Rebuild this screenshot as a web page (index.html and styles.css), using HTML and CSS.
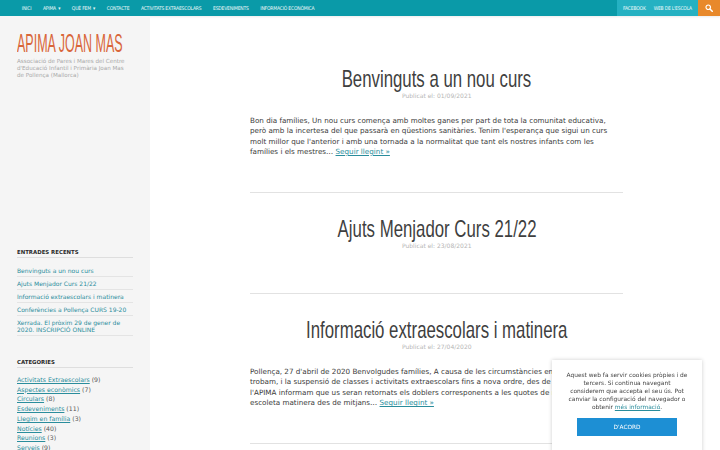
FILE: index.html
```html
<!DOCTYPE html>
<html lang="ca">
<head>
	<meta charset="UTF-8"/>
	<meta name="viewport" content="width=device-width, initial-scale=1.0">
	<title>APIMA Joan Mas</title>
	<link rel="stylesheet" href="styles.css">
</head>
<body>
	<!-- Top bar -->
	<div class="topbar">
		<nav class="mainnav">
			<a href="#">Inici</a>
			<a href="#">APIMA <span class="caret">▾</span></a>
			<a href="#">Què fem <span class="caret">▾</span></a>
			<a href="#">Contacte</a>
			<a href="#">Activitats extraescolars</a>
			<a href="#">Esdeveniments</a>
			<a href="#">Informació econòmica</a>
		</nav>
		<div class="social">
			<a href="#">Facebook</a>
			<a href="#">Web de l'escola</a>
		</div>
		<button class="search" aria-label="Cerca">
			<svg width="8" height="8" viewBox="0 0 16 16"><circle cx="6.5" cy="6.5" r="4.5" fill="none" stroke="#fff" stroke-width="2.4"/><path d="M10 10 L14.5 14.5" stroke="#fff" stroke-width="3" stroke-linecap="round"/></svg>
		</button>
	</div>

	<div class="layout">
		<!-- Sidebar -->
		<aside class="sidebar">
			<div class="site-title"><span>APIMA JOAN MAS</span></div>
			<p class="site-desc">Associació de Pares i Mares del Centre d'Educació Infantil i Primària Joan Mas de&nbsp;Pollença (Mallorca)</p>

			<div class="widget">
				<h3>Entrades recents</h3>
				<ul class="recent">
					<li><a href="#">Benvinguts a un nou curs</a></li>
					<li><a href="#">Ajuts Menjador Curs 21/22</a></li>
					<li><a href="#">Informació extraescolars i matinera</a></li>
					<li><a href="#">Conferències a Pollença CURS 19-20</a></li>
					<li><a href="#">Xerrada. El pròxim 29 de gener de 2020. INSCRIPCIÓ ONLINE</a></li>
				</ul>
			</div>

			<div class="widget">
				<h3>Categories</h3>
				<ul class="cats">
					<li><a href="#">Activitats Extraescolars</a> (9)</li>
					<li><a href="#">Aspectes econòmics</a> (7)</li>
					<li><a href="#">Circulars</a> (8)</li>
					<li><a href="#">Esdeveniments</a> (11)</li>
					<li><a href="#">Llegim en família</a> (3)</li>
					<li><a href="#">Notícies</a> (40)</li>
					<li><a href="#">Reunions</a> (3)</li>
					<li><a href="#">Serveis</a> (9)</li>
				</ul>
			</div>
		</aside>

		<!-- Posts -->
		<main class="content">
			<article class="post">
				<h2 class="post-title"><span>Benvinguts a un nou curs</span></h2>
				<div class="post-meta">Publicat el: 01/09/2021</div>
				<p class="excerpt">Bon dia famílies, Un nou curs comença amb moltes ganes per part de tota la comunitat educativa, però amb la incertesa del que passarà en qüestions sanitàries. Tenim l'esperança que sigui un curs molt millor que l'anterior i amb una tornada a la normalitat que tant els nostres infants com les famílies i els mestres… <a href="#">Seguir llegint »</a></p>
			</article>
			<article class="post post-empty">
				<h2 class="post-title"><span>Ajuts Menjador Curs 21/22</span></h2>
				<div class="post-meta">Publicat el: 23/08/2021</div>
			</article>
			<article class="post">
				<h2 class="post-title"><span>Informació extraescolars i matinera</span></h2>
				<div class="post-meta">Publicat el: 27/04/2020</div>
				<p class="excerpt">Pollença, 27 d'abril de 2020 Benvolgudes famílies, A causa de les circumstàncies en les quals ens trobam, i la suspensió de classes i activitats extraescolars fins a nova ordre, des de la Junta Directiva, l'APIMA informam que us seran retornats els doblers corresponents a les quotes de menjador i l'<wbr>escoleta matinera des de mitjans… <a href="#">Seguir llegint »</a></p>
			</article>
		</main>
	</div>

	<!-- Cookie notice -->
	<div class="cookies">
		<p>Aquest web fa servir cookies pròpies i de tercers. Si continua navegant<br>considerem que accepta el seu ús. Pot canviar la configuració del navegador o obtenir <a href="#">més informació</a>.</p>
		<button class="cookie-btn">D'ACORD</button>
	</div>
</body>
</html>
```

FILE: styles.css
```css
	/* Base */
	body {
		margin: 0;
		font-family: "DejaVu Sans", sans-serif;
		color: #2b2b2b;
		background: #fff;
	}
	a {
		color: #2a8d9c;
	}
	/* Top bar */
	.topbar {
		display: flex;
		align-items: stretch;
		height: 16px;
		background-color: #0a9aa8;
		box-shadow: 0 1px 2px rgba(0, 0, 0, 0.08);
	}
	.mainnav {
		display: flex;
		align-items: center;
		padding-left: 16px;
		flex: 1;
	}
	.mainnav a,
	.social a {
		font-family: "Liberation Sans Narrow", "DejaVu Sans Condensed", sans-serif;
		font-size: 5px;
		letter-spacing: -0.2px;
		text-transform: uppercase;
		color: #eef9fa;
		text-decoration: none;
		padding: 0 5.8px;
	}
	.caret {
		font-size: 5px;
		margin-left: 1px;
	}
	.social {
		display: flex;
		align-items: center;
		background-color: #25b1c2;
		padding: 0 2px;
	}
	.social a {
		padding: 0 4px;
	}
	.search {
		width: 22px;
		border: none;
		padding: 0;
		background-color: #e8892b;
		display: flex;
		align-items: center;
		justify-content: center;
	}
	/* Two columns */
	.layout {
		display: flex;
	}
	.sidebar {
		width: 150px;
		flex-shrink: 0;
		box-sizing: border-box;
		padding: 0 17px;
		background-color: #f5f5f5;
		min-height: 434px;
	}
	.site-title {
		margin-top: 15px;
		font-family: "Liberation Sans Narrow", sans-serif;
		font-size: 25px;
		line-height: 25px;
		color: #d9663a;
		white-space: nowrap;
	}
	.site-title span {
		display: inline-block;
		transform: scaleX(0.5);
		transform-origin: left center;
	}
	.site-desc {
		margin: 2px 0 0;
		font-size: 5.6px;
		line-height: 7px;
		color: #a9a9a9;
	}
	.widget {
		margin-top: 169px;
	}
	.widget + .widget {
		margin-top: 22px;
	}
	.widget h3 {
		margin: 0;
		font-size: 5.4px;
		line-height: 8px;
		text-transform: uppercase;
		color: #2b2b2b;
		padding-bottom: 1px;
		border-bottom: 1px solid #dedede;
	}
	.widget ul {
		list-style: none;
		margin: 0;
		padding: 0;
	}
	.recent {
		padding-top: 6px !important;
	}
	.recent li {
		font-size: 6px;
		line-height: 7px;
		padding: 2.5px 0;
		border-bottom: 1px solid #e4e4e4;
	}
	.recent a {
		text-decoration: none;
	}
	.cats {
		padding-top: 7px !important;
	}
	.cats li {
		font-size: 6.2px;
		line-height: 9.7px;
		color: #555;
	}
	/* Posts */
	.content {
		flex: 1;
		padding: 34px 100px 0;
	}
	.post {
		padding: 16px 0 35px;
		border-bottom: 1px solid #e2e2e2;
		text-align: center;
	}
	.post + .post {
		padding-top: 23px;
	}
	.post-empty {
		padding-bottom: 43px;
	}
	.post-title {
		margin: 0;
		font-family: "Liberation Sans Narrow", sans-serif;
		font-weight: normal;
		font-size: 24px;
		line-height: 26px;
		color: #3f3f3f;
		white-space: nowrap;
	}
	.post-title span {
		display: inline-block;
		transform: scaleX(0.7);
	}
	.post-meta {
		font-size: 6px;
		line-height: 8px;
		color: #b5b5b5;
	}
	.excerpt {
		margin: 16px 0 0;
		text-align: left;
		font-size: 7.2px;
		line-height: 10.3px;
		color: #3a3a3a;
	}
	/* Cookie notice */
	.cookies {
		position: fixed;
		left: 552px;
		top: 360px;
		width: 150px;
		height: 100px;
		box-sizing: border-box;
		padding: 11px 10px 0;
		background: #fff;
		box-shadow: 0 0 4px rgba(0, 0, 0, 0.2);
		text-align: center;
	}
	.cookies p {
		margin: 0;
		font-size: 5.9px;
		line-height: 8px;
		color: #444;
	}
	.cookie-btn {
		margin-top: 7px;
		width: 100px;
		height: 18px;
		border: none;
		background-color: #1d8fd4;
		color: #fff;
		font-family: "DejaVu Sans", sans-serif;
		font-size: 5.8px;
	}
```
